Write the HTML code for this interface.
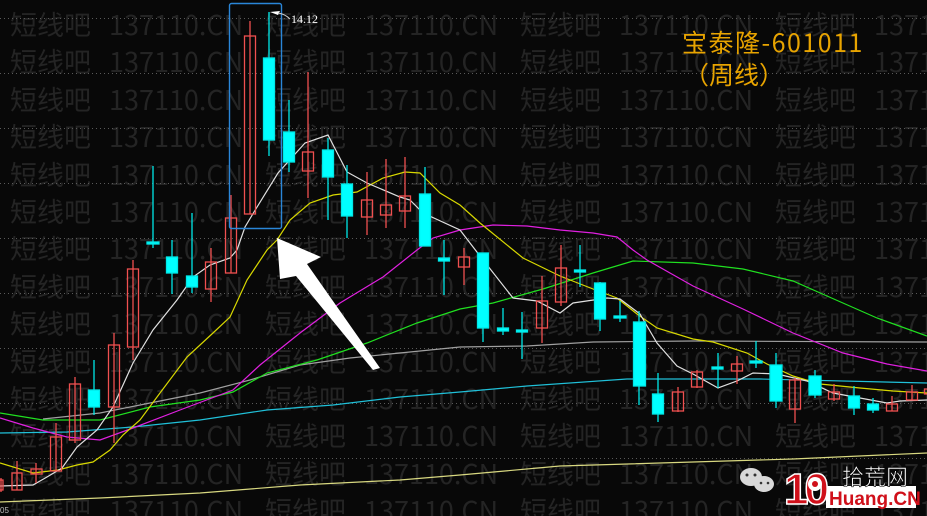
<!DOCTYPE html>
<html><head><meta charset="utf-8"><style>
html,body{margin:0;padding:0;background:#080808;width:927px;height:516px;overflow:hidden}
svg{display:block}
.wm{font-family:"Noto Sans CJK SC","Liberation Sans",sans-serif;font-size:27px;fill:#242424}
.r{stroke:#f05050;fill:none;stroke-width:1.3}
.c{stroke:#00e8e8;fill:#00ffff;stroke-width:1.3}
.g{stroke:#5a5a5a;stroke-width:1;stroke-dasharray:1 3}
</style></head><body>
<svg width="927" height="516" viewBox="0 0 927 516" xmlns="http://www.w3.org/2000/svg">
<rect width="927" height="516" fill="#080808"/>
<g class="wm">
<text y="35"><tspan x="10">短线吧</tspan><tspan x="109">137110.CN</tspan><tspan x="265">短线吧</tspan><tspan x="364">137110.CN</tspan><tspan x="520">短线吧</tspan><tspan x="619">137110.CN</tspan><tspan x="775">短线吧</tspan><tspan x="874">1371</tspan></text>
<text y="72"><tspan x="10">短线吧</tspan><tspan x="109">137110.CN</tspan><tspan x="265">短线吧</tspan><tspan x="364">137110.CN</tspan><tspan x="520">短线吧</tspan><tspan x="619">137110.CN</tspan><tspan x="775">短线吧</tspan><tspan x="874">1371</tspan></text>
<text y="110"><tspan x="10">短线吧</tspan><tspan x="109">137110.CN</tspan><tspan x="265">短线吧</tspan><tspan x="364">137110.CN</tspan><tspan x="520">短线吧</tspan><tspan x="619">137110.CN</tspan><tspan x="775">短线吧</tspan><tspan x="874">1371</tspan></text>
<text y="147"><tspan x="10">短线吧</tspan><tspan x="109">137110.CN</tspan><tspan x="265">短线吧</tspan><tspan x="364">137110.CN</tspan><tspan x="520">短线吧</tspan><tspan x="619">137110.CN</tspan><tspan x="775">短线吧</tspan><tspan x="874">1371</tspan></text>
<text y="185"><tspan x="10">短线吧</tspan><tspan x="109">137110.CN</tspan><tspan x="265">短线吧</tspan><tspan x="364">137110.CN</tspan><tspan x="520">短线吧</tspan><tspan x="619">137110.CN</tspan><tspan x="775">短线吧</tspan><tspan x="874">1371</tspan></text>
<text y="222"><tspan x="10">短线吧</tspan><tspan x="109">137110.CN</tspan><tspan x="265">短线吧</tspan><tspan x="364">137110.CN</tspan><tspan x="520">短线吧</tspan><tspan x="619">137110.CN</tspan><tspan x="775">短线吧</tspan><tspan x="874">1371</tspan></text>
<text y="259"><tspan x="10">短线吧</tspan><tspan x="109">137110.CN</tspan><tspan x="265">短线吧</tspan><tspan x="364">137110.CN</tspan><tspan x="520">短线吧</tspan><tspan x="619">137110.CN</tspan><tspan x="775">短线吧</tspan><tspan x="874">1371</tspan></text>
<text y="297"><tspan x="10">短线吧</tspan><tspan x="109">137110.CN</tspan><tspan x="265">短线吧</tspan><tspan x="364">137110.CN</tspan><tspan x="520">短线吧</tspan><tspan x="619">137110.CN</tspan><tspan x="775">短线吧</tspan><tspan x="874">1371</tspan></text>
<text y="334"><tspan x="10">短线吧</tspan><tspan x="109">137110.CN</tspan><tspan x="265">短线吧</tspan><tspan x="364">137110.CN</tspan><tspan x="520">短线吧</tspan><tspan x="619">137110.CN</tspan><tspan x="775">短线吧</tspan><tspan x="874">1371</tspan></text>
<text y="372"><tspan x="10">短线吧</tspan><tspan x="109">137110.CN</tspan><tspan x="265">短线吧</tspan><tspan x="364">137110.CN</tspan><tspan x="520">短线吧</tspan><tspan x="619">137110.CN</tspan><tspan x="775">短线吧</tspan><tspan x="874">1371</tspan></text>
<text y="409"><tspan x="10">短线吧</tspan><tspan x="109">137110.CN</tspan><tspan x="265">短线吧</tspan><tspan x="364">137110.CN</tspan><tspan x="520">短线吧</tspan><tspan x="619">137110.CN</tspan><tspan x="775">短线吧</tspan><tspan x="874">1371</tspan></text>
<text y="446"><tspan x="10">短线吧</tspan><tspan x="109">137110.CN</tspan><tspan x="265">短线吧</tspan><tspan x="364">137110.CN</tspan><tspan x="520">短线吧</tspan><tspan x="619">137110.CN</tspan><tspan x="775">短线吧</tspan><tspan x="874">1371</tspan></text>
<text y="484"><tspan x="10">短线吧</tspan><tspan x="109">137110.CN</tspan><tspan x="265">短线吧</tspan><tspan x="364">137110.CN</tspan><tspan x="520">短线吧</tspan><tspan x="619">137110.CN</tspan><tspan x="775">短线吧</tspan><tspan x="874">1371</tspan></text>
<text y="521"><tspan x="10">短线吧</tspan><tspan x="109">137110.CN</tspan><tspan x="265">短线吧</tspan><tspan x="364">137110.CN</tspan><tspan x="520">短线吧</tspan><tspan x="619">137110.CN</tspan><tspan x="775">短线吧</tspan><tspan x="874">1371</tspan></text>
</g>
<g class="g">
<line x1="0" y1="18.5" x2="927" y2="18.5"/><line x1="0" y1="73.5" x2="927" y2="73.5"/>
<line x1="0" y1="128.5" x2="927" y2="128.5"/><line x1="0" y1="183.5" x2="927" y2="183.5"/>
<line x1="0" y1="238.5" x2="927" y2="238.5"/><line x1="0" y1="293.5" x2="927" y2="293.5"/>
<line x1="0" y1="348.5" x2="927" y2="348.5"/><line x1="0" y1="403.5" x2="927" y2="403.5"/>
<line x1="0" y1="458.5" x2="927" y2="458.5"/>
</g>
<g fill="none" stroke-width="1.2">
<polyline stroke="#d8d880" points="0,502 100,498 200,493 300,485 400,480 460,475 560,466 693,462 793,459 927,453"/>
<polyline stroke="#20c0d8" points="0,433 67,432 133,427 200,420 267,410 333,405 400,397 460,392 527,386 627,379 760,379 927,383"/>
<polyline stroke="#a0a0a0" points="43,419 100,413 150,403 200,393 250,380 300,365 350,358 460,347 527,346 593,342 693,341 927,342"/>
<polyline stroke="#20e020" points="0,413 43,420 100,420 150,407 200,400 233,392 267,373 317,360 367,343 417,323 460,309 493,303 543,289 593,273 633,261 693,263 743,269 793,281 827,296 877,318 927,336"/>
<polyline stroke="#e020e0" points="0,418 33,428 67,437 100,440 133,428 180,410 233,390 260,365 300,333 340,303 383,277 417,250 433,238 460,230 493,225 527,226 560,230 593,233 617,237 633,250 647,260 693,286 743,309 793,333 843,353 887,364 927,371"/>
<polyline stroke="#d8d800" points="0,463 33,473 58,470 77,465 93,462 110,450 123,435 140,420 160,393 187,357 213,333 230,317 247,280 267,250 277,240 290,220 310,203 333,195 357,192 383,178 405,172 420,173 440,193 460,205 480,223 523,258 560,276 593,289 617,298 637,314 657,328 693,339 713,342 747,353 767,364 793,376 820,384 860,388 893,391 927,393"/>
<polyline stroke="#e0e0e0" points="0,486 33,485 47,477 62,468 77,447 97,430 113,407 133,363 153,330 177,300 193,277 210,265 230,258 237,250 245,227 254,212 278,173 305,143 328,135 347,172 367,183 400,197 410,200 423,213 460,230 480,256 513,298 537,301 560,313 573,303 607,298 620,299 640,314 657,343 677,366 693,374 718,388 737,381 753,373 777,374 807,381 833,393 860,398 887,403 900,401 927,400"/>
</g>
<g class="r">
<line x1="1" y1="478" x2="1" y2="492"/><rect x="-4" y="480" width="7" height="10"/>
<line x1="17" y1="461" x2="17" y2="490"/><rect x="12" y="473" width="10" height="17"/>
<line x1="36" y1="463" x2="36" y2="483"/><rect x="31" y="469" width="11" height="5"/>
<line x1="56" y1="423" x2="56" y2="471"/><rect x="50.5" y="437" width="11" height="34"/>
<line x1="75" y1="377" x2="75" y2="443"/><rect x="69.5" y="384" width="11" height="56"/>
<line x1="114" y1="333" x2="114" y2="443"/><rect x="108.5" y="345" width="11" height="62"/>
<line x1="133" y1="260" x2="133" y2="360"/><rect x="127.5" y="269" width="11" height="78"/>
<line x1="211" y1="248" x2="211" y2="302"/><rect x="205.5" y="262" width="11" height="27"/>
<line x1="231" y1="195" x2="231" y2="273"/><rect x="225.5" y="218" width="11" height="55"/>
<line x1="250" y1="21" x2="250" y2="214"/><rect x="244.5" y="36" width="11" height="178"/>
<line x1="308" y1="72" x2="308" y2="198"/><rect x="302.5" y="152" width="11" height="19"/>
<line x1="367" y1="172" x2="367" y2="235"/><rect x="361.5" y="200" width="11" height="17"/>
<line x1="386" y1="159" x2="386" y2="228"/><rect x="380.5" y="205" width="11" height="10"/>
<line x1="405" y1="157" x2="405" y2="228"/><rect x="399.5" y="196" width="11" height="15"/>
<line x1="464" y1="248" x2="464" y2="285"/><rect x="458.5" y="257" width="11" height="10"/>
<line x1="542" y1="276" x2="542" y2="343"/><rect x="536.5" y="301" width="11" height="27"/>
<line x1="561" y1="245" x2="561" y2="306"/><rect x="555.5" y="268" width="11" height="34"/>
<line x1="678" y1="387" x2="678" y2="412"/><rect x="672.5" y="392" width="11" height="19"/>
<line x1="697" y1="370" x2="697" y2="388"/><rect x="691.5" y="372" width="11" height="15"/>
<line x1="737" y1="356" x2="737" y2="384"/><rect x="731.5" y="364" width="11" height="7"/>
<line x1="795" y1="378" x2="795" y2="423"/><rect x="789.5" y="380" width="11" height="29"/>
<line x1="834" y1="384" x2="834" y2="401"/><rect x="828.5" y="392" width="11" height="7"/>
<line x1="892" y1="396" x2="892" y2="411"/><rect x="886.5" y="404" width="11" height="7"/>
<line x1="912" y1="385" x2="912" y2="400"/><rect x="906.5" y="392" width="11" height="8"/>
<rect x="924.5" y="389" width="11" height="5"/>
</g>
<g class="c">
<line x1="94" y1="360" x2="94" y2="415"/><rect x="88.5" y="390" width="11" height="17"/>
<line x1="153" y1="166" x2="153" y2="248"/><rect x="147" y="242" width="12" height="2"/>
<line x1="172" y1="240" x2="172" y2="294"/><rect x="166.5" y="257" width="11" height="16"/>
<line x1="192" y1="213" x2="192" y2="293"/><rect x="186.5" y="276" width="11" height="11"/>
<line x1="269" y1="12" x2="269" y2="156"/><rect x="263.5" y="58" width="11" height="82"/>
<line x1="289" y1="100" x2="289" y2="172"/><rect x="283.5" y="132" width="11" height="30"/>
<line x1="328" y1="138" x2="328" y2="220"/><rect x="322.5" y="150" width="11" height="27"/>
<line x1="347" y1="165" x2="347" y2="238"/><rect x="341.5" y="184" width="11" height="32"/>
<line x1="425" y1="167" x2="425" y2="246"/><rect x="419.5" y="194" width="11" height="52"/>
<line x1="444" y1="240" x2="444" y2="295"/><rect x="438.5" y="258" width="11" height="3"/>
<line x1="483" y1="253" x2="483" y2="342"/><rect x="477.5" y="253" width="11" height="75"/>
<line x1="503" y1="308" x2="503" y2="335"/><rect x="497.5" y="328" width="11" height="3"/>
<line x1="522" y1="312" x2="522" y2="359"/><rect x="516.5" y="330" width="11" height="2"/>
<line x1="580" y1="245" x2="580" y2="287"/><rect x="574.5" y="270" width="11" height="2"/>
<line x1="600" y1="282" x2="600" y2="331"/><rect x="594.5" y="283" width="11" height="36"/>
<line x1="620" y1="301" x2="620" y2="322"/><rect x="614" y="316" width="12" height="2"/>
<line x1="639" y1="311" x2="639" y2="405"/><rect x="633.5" y="322" width="12" height="64"/>
<line x1="658" y1="373" x2="658" y2="422"/><rect x="652.5" y="394" width="11" height="20"/>
<line x1="718" y1="353" x2="718" y2="388"/><rect x="712" y="367" width="11" height="2"/>
<line x1="756" y1="341" x2="756" y2="368"/><rect x="750" y="361" width="12" height="2"/>
<line x1="776" y1="353" x2="776" y2="408"/><rect x="770" y="365" width="12" height="36"/>
<line x1="815" y1="370" x2="815" y2="398"/><rect x="809" y="376" width="12" height="19"/>
<line x1="854" y1="386" x2="854" y2="415"/><rect x="848.5" y="396" width="11" height="12"/>
<line x1="873" y1="398" x2="873" y2="413"/><rect x="867.5" y="404" width="11" height="6"/>
</g>
<rect x="229.5" y="3.5" width="52" height="225" rx="2" fill="none" stroke="#2a86d8" stroke-width="1.4"/>
<path d="M270 12 L280 11 L278 15 Z" fill="#ffffff"/>
<path d="M278 13 Q285 14 290 19" stroke="#ccc" fill="none" stroke-width="1"/>
<text x="291" y="23" font-family="Liberation Serif,serif" font-size="12" fill="#ffffff">14.12</text>
<polygon points="277,238 321,257 307,264 380,368 373,370 296,276 280,279" fill="#ffffff"/>
<text x="682" y="52" font-family="'Noto Sans CJK SC',sans-serif" font-size="25" letter-spacing="1.5" fill="#e8a400">宝泰隆-601011</text>
<text x="684" y="84" font-family="'Noto Sans CJK SC',sans-serif" font-size="25" fill="#e8a400">（周线）</text>
<text x="0" y="513" font-family="Liberation Sans,sans-serif" font-size="8" fill="#bbb">05</text>
<g fill="#d8d8d8">
<ellipse cx="751" cy="477" rx="11" ry="9"/>
<ellipse cx="764" cy="484" rx="10" ry="8"/>
</g>
<g fill="#333"><circle cx="747" cy="475" r="1.5"/><circle cx="755" cy="475" r="1.5"/><circle cx="761" cy="483" r="1.3"/><circle cx="768" cy="483" r="1.3"/></g>
<rect x="826" y="486" width="90" height="22" fill="#ffffff"/>
<text x="784" y="504" font-family="Liberation Sans,sans-serif" font-weight="bold" font-size="44" fill="#d0101a" stroke="#fff" stroke-width="1.5" letter-spacing="-4">10</text>
<circle cx="815" cy="484" r="7" fill="#fff"/><circle cx="815" cy="484" r="3" fill="#d0101a"/>
<text x="829" y="505" font-family="Liberation Sans,sans-serif" font-weight="bold" font-size="19" fill="#d0101a">Huang.CN</text>
<text x="842" y="485" font-family="'Noto Sans CJK SC',sans-serif" font-size="22" fill="#ffffff" stroke="#000" stroke-width="0.6">拾荒网</text>
</svg>
</body></html>
